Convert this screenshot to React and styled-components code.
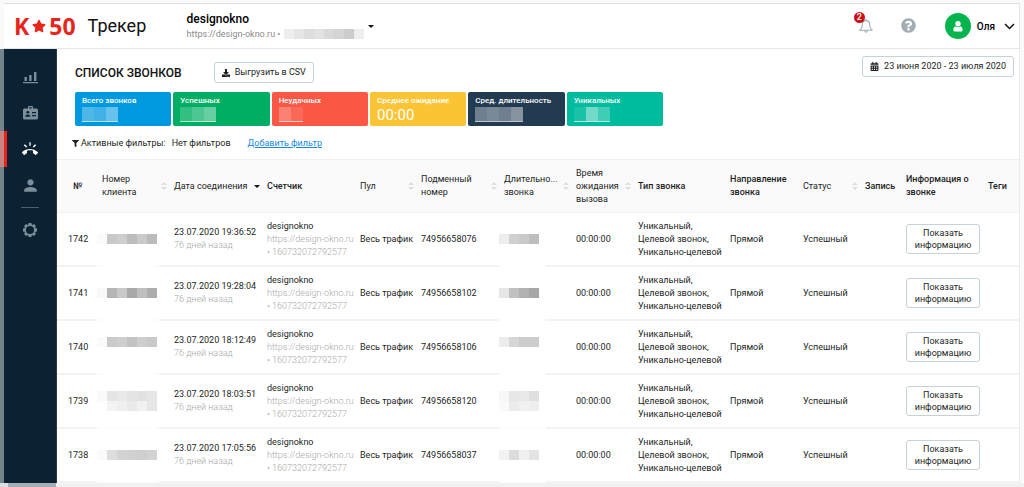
import React from 'react'
import styled, { createGlobalStyle, css } from 'styled-components'
import { FaCalendarAlt, FaDownload, FaFilter, FaQuestionCircle, FaStar } from 'react-icons/fa'
import { MdRingVolume, MdPerson } from 'react-icons/md'

const color = {
    ink: '#1c1f23',
    faint: '#a8a8a8',
    line: '#f3f3f3',
    border: '#c6d2da',
    navy: '#0a2232',
    navIcon: '#7b8e9a',
    red: '#e8251c',
    link: '#1a88e6',
}

const GlobalStyle = createGlobalStyle`
    * {
        box-sizing: border-box;
    }
    body {
        margin: 0;
        background: #fafafa;
        color: ${color.ink};
        font-family: Roboto, "Liberation Sans", sans-serif;
        font-size: 9px;
        line-height: 13px;
    }
    button {
        font: inherit;
        color: inherit;
        padding: 0;
        border: 0;
        background: none;
        cursor: pointer;
    }
`

const Page = styled.div`
    min-height: 100vh;
    padding-top: 3px;
    display: flex;
    flex-direction: column;
`

const Header = styled.header`
    height: 46px;
    margin: 0 4px;
    padding: 0 4px 0 10px;
    display: flex;
    align-items: center;
    background: #fff;
    border: 1px solid #e4e7ea;
    border-top-color: #dcdcdc;
    border-left: 0;
`

const Logo = styled.a`
    display: flex;
    align-items: center;
    color: ${color.red};
    font: 700 23px/30px "Open Sans", "Noto Sans", sans-serif;
    text-decoration: none;

    svg {
        width: 14px;
        height: 14px;
        margin: 0 3px;
    }
`

const Product = styled.span`
    width: 111px;
    padding-left: 12px;
    font-size: 18px;
    line-height: 24px;
    color: #111;
`

const Account = styled.button`
    display: flex;
    align-items: center;
    gap: 4px;
    text-align: left;

    .name {
        display: block;
        font-size: 12px;
        font-weight: 500;
        line-height: 16px;
        color: #000;
    }
    .site {
        display: flex;
        align-items: center;
        gap: 4px;
        line-height: 14px;
        color: #8b8b8b;
    }
`

const Caret = styled.span`
    flex: none;
    width: 0;
    height: 0;
    border: 3px solid transparent;
    border-top-color: #111;
    border-bottom: 0;
`

const Tools = styled.div`
    margin-left: auto;
    display: flex;
    align-items: center;

    .bell {
        position: relative;
        width: 14px;
        height: 16px;
        margin-right: 28px;
    }
    .help {
        height: 16px;
        color: #a2adb6;
        margin-right: 29px;
    }
`

const Badge = styled.span`
    position: absolute;
    left: -5px;
    top: -6px;
    width: 11px;
    height: 11px;
    border-radius: 50%;
    background: #cf0d14;
    color: #fff;
    font-size: 9px;
    font-weight: 500;
    line-height: 11px;
    text-align: center;
`

const User = styled.button`
    display: flex;
    align-items: center;
    font-size: 10px;
    font-weight: 500;
    color: #000;

    .avatar {
        width: 26px;
        height: 26px;
        margin-right: 6px;
        display: flex;
        align-items: center;
        justify-content: center;
        border-radius: 50%;
        background: #04b54d;
        color: #fff;
    }
    .chevron {
        margin-left: 9px;
    }
`

const Body = styled.div`
    flex: 1;
    display: flex;
    padding-right: 4px;
`

const Sidebar = styled.nav`
    flex: none;
    width: 57px;
    padding-top: 10px;
    background: ${color.navy};
    border-left: 4px solid #73848d;
    border-right: 1px solid #30383f;

    hr {
        width: 18px;
        margin: 4px auto;
        border: 0;
        border-top: 1px solid #4b5f6c;
    }
`

const NavItem = styled.a`
    position: relative;
    height: 36px;
    display: flex;
    align-items: center;
    justify-content: center;
    color: ${props => props.$active ? '#fff' : color.navIcon};

    ${props => props.$active && css`
        &::before {
            content: '';
            position: absolute;
            left: -4px;
            top: 0;
            width: 7px;
            height: 100%;
            background: linear-gradient(to right, #c98484 4px, ${color.red} 4px);
        }
    `}
`

const Main = styled.main`
    flex: 1;
    min-width: 0;
    background: #fff;
    border-right: 1px solid #ececec;
`

const Toolbar = styled.div`
    padding: 7px 5px 0 18px;
    display: flex;
    align-items: flex-end;

    h1 {
        margin: 0 32px 0 0;
        font-size: 12px;
        font-weight: 500;
        line-height: 20px;
        color: #111;
    }
`

const ToolButton = styled.button`
    height: 21px;
    padding: 0 7px;
    display: flex;
    align-items: center;
    gap: 5px;
    background: #fff;
    border: 1px solid ${color.border};
    border-radius: 3px;
    margin-left: ${props => props.$right ? 'auto' : '0'};
    margin-bottom: ${props => props.$right ? '6px' : '0'};
`

const Stats = styled.div`
    max-width: 606px;
    padding: 9px 0 0 18px;
    display: grid;
    grid-template-columns: repeat(6, 1fr);
    gap: 2px;
`

const Stat = styled.div`
    height: 34px;
    padding: 3px 7px;
    border-radius: 2px;
    background: ${props => props.$color};
    color: #fff;

    .label {
        font-size: 8px;
        font-weight: 500;
        line-height: 12px;
        white-space: nowrap;
    }
    .value {
        font-size: 15px;
        line-height: 16px;
    }
`

const StatMask = styled.div`
    display: inline-flex;
    border-bottom: 1px solid rgba(255, 255, 255, 0.7);

    i {
        width: 12px;
        height: 14px;
        background: #fff;
    }
`

const Filters = styled.div`
    height: 33px;
    padding: 1px 0 0 15px;
    display: flex;
    align-items: center;

    .state {
        margin: 0 17px 0 6px;
    }
    svg {
        margin-right: 2px;
    }
    a {
        color: ${color.link};
    }
`

const Table = styled.table`
    width: 100%;
    table-layout: fixed;
    border-collapse: separate;
    border-spacing: 0;
    border-top: 1px solid #efefef;

    th, td {
        position: relative;
        height: 54px;
        padding: 0 0 0 7px;
        text-align: left;
        vertical-align: middle;
        white-space: nowrap;
        border-bottom: 2px solid ${color.line};
    }
    th:first-child, td:first-child {
        padding-left: 11px;
    }
    th {
        height: 53px;
        background: #fafafa;
        border-bottom-width: 1px;
    }
`

const HeadCell = styled.div`
    display: flex;
    align-items: center;
    justify-content: space-between;
    font-weight: ${props => props.$plain ? 400 : 500};
    padding-left: ${props => props.$indent ? '5px' : '0'};
    white-space: pre-line;
`

const Sorter = styled.span`
    flex: none;
    display: grid;
    gap: 2px;

    &::before, &::after {
        content: '';
        border: 3px solid transparent;
    }
    &::before {
        border-top: 0;
        border-bottom-color: #dedede;
    }
    &::after {
        border-bottom: 0;
        border-top-color: #dedede;
    }
`

const Sub = styled.div`
    font-weight: 300;
    color: ${color.faint};
`

const MaskCell = styled.td`
    &::after {
        content: '';
        position: absolute;
        left: 2px;
        width: ${props => props.$narrow ? '47px' : '62px'};
        bottom: -2px;
        height: 2px;
        background: #fdfdfd;
    }
`

const Mosaic = styled.div`
    display: grid;
    width: max-content;
    grid-template-columns: repeat(${props => props.$cols}, 10px);
    margin-left: ${props => props.$shift ? '-5px' : '0'};

    i {
        height: 10px;
    }
`

const InfoButton = styled.button`
    width: 74px;
    height: 30px;
    display: block;
    line-height: 12px;
    text-align: center;
    white-space: normal;
    background: #fff;
    border: 1px solid ${color.border};
    border-radius: 3px;
`

const BottomEdge = styled.div`
    height: 4px;
    background: linear-gradient(to right, #dcdfe2 8px, #a5adb4 8px, #a5adb4 56px, #f1f1f1 56px);
`

const BarsIcon = () => (
    <svg width="15" height="13" viewBox="0 0 15 13" fill="currentColor">
        <path d="M0 11h15v1.3H0zM1.5 6h2.4v4H1.5zM6.2 4h2.4v6H6.2zM11 1h2.4v9H11z" />
    </svg>
)

const CardIcon = () => (
    <svg width="15" height="14" viewBox="0 0 15 14" fill="currentColor">
        <path fillRule="evenodd" d="M5 2.500V1c0-.6.4-1 1-1h3c.6 0 1 .4 1 1v1.500h3.500c.8 0 1.500.7 1.500 1.500v8c0 .8-.7 1.500-1.500 1.500h-12C.7 13.500 0 12.800 0 12V4c0-.8.7-1.500 1.500-1.500zm1.300 0h2.400V1.200H6.300z" />
        <g fill={color.navy}>
            <circle cx="4.800" cy="6.300" r="1.400" />
            <path d="M2.300 10.800c0-1.600 1-2.300 2.500-2.300s2.500.7 2.500 2.300zM9 6h4v1.200H9zM9 9h4v1.200H9z" />
        </g>
    </svg>
)

const BellIcon = () => (
    <svg width="14" height="16" viewBox="0 0 14 16" fill="none" stroke="#a2adb6" strokeWidth="1.1">
        <path d="M7 1v1.4M.8 12.200c1.800-1.400 2.600-3 2.600-5.800C3.400 4 4.900 2.600 7 2.600s3.600 1.400 3.600 3.800c0 2.800.8 4.400 2.600 5.800z" strokeLinejoin="round" />
        <path d="M5.600 12.600c0 1 .5 1.600 1.400 1.600s1.400-.6 1.400-1.600" />
    </svg>
)

const GearIcon = () => (
    <svg width="16" height="16" viewBox="0 0 16 16" fill="currentColor">
        {[0, 45, 90, 135].map((angle) => (
            <path key={angle} d="M6 3.600 6.600 1h2.800l.6 2.600zM6 12.400 6.600 15h2.800l.6-2.600z" transform={`rotate(${angle} 8 8)`} />
        ))}
        <circle cx="8" cy="8" r="4.900" fill={color.navy} stroke="currentColor" strokeWidth="1.700" />
    </svg>
)

const AvatarIcon = () => (
    <svg width="10" height="11" viewBox="0 0 10 11" fill="currentColor">
        <circle cx="5" cy="2.800" r="2.700" />
        <path d="M2.400 5.200C3.900 6.400 6.100 6.400 7.600 5.200 9 5.900 9.600 7.200 9.600 9c0 1-.6 1.500-1.400 1.500H1.800C1 10.500.4 10 .4 9c0-1.800.6-3.100 2-3.800z" />
    </svg>
)

const stats = [
    { label: 'Всего звонков', color: '#0099df', mask: [0.3, 0.25, 0.4] },
    { label: 'Успешных', color: '#00ae63', mask: [0.2, 0.3, 0.4] },
    { label: 'Неудачных', color: '#fa5745', mask: [0.25, 0.1] },
    { label: 'Среднее ожидание', color: '#fbc434', value: '00:00' },
    { label: 'Сред. длительность', color: '#223b50', mask: [0.35, 0.4, 0.35, 0.45] },
    { label: 'Уникальных', color: '#00bc9e', mask: [0.1, 0.45, 0.25] },
]

const columns = [
    { title: '№', width: 38, indent: true },
    { title: 'Номер\nклиента', width: 72, sort: true },
    { title: 'Дата соединения', width: 93, sort: true, active: true },
    { title: 'Счетчик', width: 93 },
    { title: 'Пул', width: 61, sort: true },
    { title: 'Подменный\nномер', width: 83, sort: true },
    { title: 'Длительно...\nзвонка', width: 72, sort: true },
    { title: 'Время\nожидания\nвызова', width: 62, sort: true },
    { title: 'Тип звонка', width: 92 },
    { title: 'Направление\nзвонка', width: 73 },
    { title: 'Статус', width: 62, sort: true },
    { title: 'Запись', width: 41 },
    { title: 'Информация о\nзвонке', width: 82 },
    { title: 'Теги', width: 38 },
]

const calls = [
    {
        id: 1742, date: '23.07.2020 19:36:52', phone: '74956658076',
        client: ['#fbfbfb', '#c9c9c9', '#cecece', '#bdbdbd', '#cacaca', '#bbbbbb'],
        duration: ['#ededed', '#d0d0d0', '#cacaca', '#bebebe'],
    },
    {
        id: 1741, date: '23.07.2020 19:28:04', phone: '74956658102',
        client: ['#f8f8f8', '#b5b5b5', '#c8c8c8', '#a9a9a9', '#bfbfbf', '#adadad'],
        duration: ['#e6e6e6', '#c0c0c0', '#b1b1b1', '#a7a7a7'],
    },
    {
        id: 1740, date: '23.07.2020 18:12:49', phone: '74956658106',
        client: ['#fafafa', '#cacaca', '#cecece', '#c2c2c2', '#cecece', '#c9c9c9', '#fff', '#fff', '#fff', '#fff', '#fff', '#fff'],
        duration: ['#ececec', '#d6d6d6', '#cccccc', '#cccccc', '#fff', '#fff', '#fff', '#fff'],
    },
    {
        id: 1739, date: '23.07.2020 18:03:51', phone: '74956658120',
        client: ['#fafafa', '#e5e5e5', '#e9e9e9', '#e4e4e4', '#e1e1e1', '#e6e6e6', '#fefefe', '#f3f3f3', '#efefef', '#e9e9e9', '#f1f1f1', '#e6e6e6'],
        duration: ['#f7f7f7', '#e7e7e7', '#e8e8e8', '#dfdfdf', '#fafafa', '#ececec', '#f1f1f1', '#eeeeee'],
    },
    {
        id: 1738, date: '23.07.2020 17:05:56', phone: '74956658037',
        client: ['#fafafa', '#dddddd', '#d3d3d3', '#d1d1d1', '#cfcfcf', '#d3d3d3'],
        duration: ['#f2f2f2', '#dcdcdc', '#f0f0f0', '#e3e3e3'],
    },
]

const Blocks = ({ colors, cols, shift }) => (
    <Mosaic $cols={cols} $shift={shift}>
        {colors.map((background, i) => <i key={i} style={{ background }} />)}
    </Mosaic>
)

const CallRow = ({ call }) => (
    <tr>
        <td>{call.id}</td>
        <MaskCell><Blocks colors={call.client} cols={6} shift /></MaskCell>
        <td>
            {call.date}
            <Sub>76 дней назад</Sub>
        </td>
        <td>
            designokno
            <Sub>https://design-okno.ru<br />• 160732072792577</Sub>
        </td>
        <td>Весь трафик</td>
        <td>{call.phone}</td>
        <MaskCell $narrow><Blocks colors={call.duration} cols={4} shift /></MaskCell>
        <td>00:00:00</td>
        <td>Уникальный,<br />Целевой звонок,<br />Уникально-целевой</td>
        <td>Прямой</td>
        <td>Успешный</td>
        <td></td>
        <td><InfoButton type="button">Показать информацию</InfoButton></td>
        <td></td>
    </tr>
)

const App = () => {
    return (
        <Page>
            <GlobalStyle />
            <Header>
                <Logo href="#">K<FaStar />50</Logo>
                <Product>Трекер</Product>
                <Account type="button">
                    <span>
                        <span className="name">designokno</span>
                        <span className="site">
                            https://design-okno.ru •
                            <Blocks cols={8} colors={['#eeeeee', '#e6e6e6', '#dddddd', '#e2e2e2', '#d9d9d9', '#d4d4d4', '#cccccc', '#eeeeee']} />
                        </span>
                    </span>
                    <Caret />
                </Account>
                <Tools>
                    <button type="button" className="bell" aria-label="Уведомления">
                        <BellIcon />
                        <Badge>2</Badge>
                    </button>
                    <button type="button" className="help" aria-label="Помощь"><FaQuestionCircle size={15} /></button>
                    <User type="button">
                        <span className="avatar"><AvatarIcon /></span>
                        Оля
                        <svg className="chevron" width="11" height="7" viewBox="0 0 11 7" fill="none" stroke="#111" strokeWidth="1.5">
                            <path d="M1 1l4.500 4.500L10 1" />
                        </svg>
                    </User>
                </Tools>
            </Header>
            <Body>
                <Sidebar>
                    <NavItem href="#" aria-label="Отчеты"><BarsIcon /></NavItem>
                    <NavItem href="#" aria-label="Счетчики"><CardIcon /></NavItem>
                    <NavItem href="#" aria-label="Звонки" $active><MdRingVolume size={16} /></NavItem>
                    <NavItem href="#" aria-label="Профиль"><MdPerson size={19} /></NavItem>
                    <hr />
                    <NavItem href="#" aria-label="Настройки"><GearIcon /></NavItem>
                </Sidebar>
                <Main>
                    <Toolbar>
                        <h1>СПИСОК ЗВОНКОВ</h1>
                        <ToolButton type="button"><FaDownload size={8} />Выгрузить в CSV</ToolButton>
                        <ToolButton type="button" $right><FaCalendarAlt size={9} />23 июня 2020 - 23 июля 2020</ToolButton>
                    </Toolbar>
                    <Stats>
                        {stats.map((stat) => (
                            <Stat key={stat.label} $color={stat.color}>
                                <div className="label">{stat.label}</div>
                                {
                                    stat.value
                                        ? <div className="value">{stat.value}</div>
                                        : <StatMask>{stat.mask.map((opacity, i) => <i key={i} style={{ opacity }} />)}</StatMask>
                                }
                            </Stat>
                        ))}
                    </Stats>
                    <Filters>
                        <FaFilter size={7} />
                        <span>Активные фильтры:</span>
                        <span className="state">Нет фильтров</span>
                        <a href="#">Добавить фильтр</a>
                    </Filters>
                    <Table>
                        <colgroup>
                            {columns.map((column) => <col key={column.title} width={column.width} />)}
                        </colgroup>
                        <thead>
                            <tr>
                                {columns.map((column) => (
                                    <th key={column.title}>
                                        <HeadCell $plain={column.sort} $indent={column.indent}>
                                            {column.title}
                                            {column.sort && (column.active ? <Caret /> : <Sorter />)}
                                        </HeadCell>
                                    </th>
                                ))}
                            </tr>
                        </thead>
                        <tbody>
                            {calls.map((call) => <CallRow key={call.id} call={call} />)}
                        </tbody>
                    </Table>
                </Main>
            </Body>
            <BottomEdge />
        </Page>
    )
}

export default App
